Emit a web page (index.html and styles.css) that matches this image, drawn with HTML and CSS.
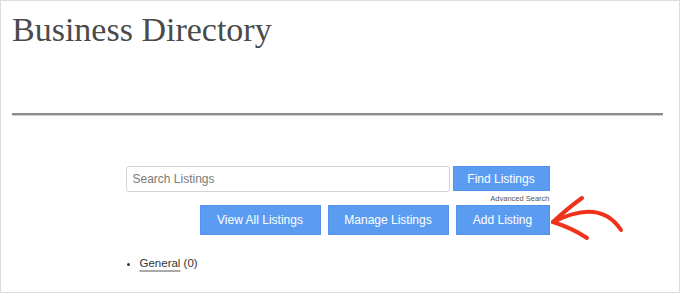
FILE: index.html
```html
<!DOCTYPE html>
<html lang="en">
<head>
<meta charset="utf-8">
<title>Business Directory</title>
<link rel="stylesheet" href="styles.css">
</head>
<body>
<div class="frame">
  <h1 class="title">Business Directory</h1>
  <div class="rule"></div>
  <div class="directory">
    <div class="search-row">
      <input class="search-input" type="text" placeholder="Search Listings">
      <div class="find-col">
        <button class="btn btn-find">Find Listings</button>
        <a class="advanced" href="#">Advanced Search</a>
      </div>
    </div>
    <div class="action-row">
      <button class="btn btn-action btn-wide">View All Listings</button>
      <button class="btn btn-action btn-wide">Manage Listings</button>
      <button class="btn btn-action btn-add">Add Listing</button>
    </div>
    <ul class="cats">
      <li><a href="#" class="cat-link">General</a> (0)</li>
    </ul>
  </div>
  <svg class="arrow" width="90" height="60" viewBox="540 190 90 60" xmlns="http://www.w3.org/2000/svg">
    <path d="M553,222 Q600,198 621,230" fill="none" stroke="#f0321c" stroke-width="4" stroke-linecap="round"/>
    <path d="M553,222 Q568,208 582,198" fill="none" stroke="#f0321c" stroke-width="4" stroke-linecap="round"/>
    <path d="M553,222 Q572,228 587,238" fill="none" stroke="#f0321c" stroke-width="4" stroke-linecap="round"/>
  </svg>
</div>
</body>
</html>
```
FILE: styles.css
```css
* { box-sizing: border-box; }
html, body { margin: 0; padding: 0; background: #fff; }
.frame {
  position: relative;
  width: 680px;
  height: 293px;
  border: 1px solid #dcdcdc;
  padding: 9px 16px 0 11px;
  font-family: "Liberation Sans", Arial, sans-serif;
  color: #333;
}
.title {
  margin: 0;
  font-family: "Liberation Serif", serif;
  font-weight: normal;
  font-size: 34px;
  line-height: 39px;
  color: #4a4a4a;
}
.rule {
  margin-top: 64px;
  height: 3px;
  background: #8c8c8c;
  border-bottom: 1px solid #d0d0d0;
  background-clip: content-box;
}
.directory {
  width: 424px;
  margin: 50px auto 0;
}
.search-row {
  display: flex;
  gap: 3px;
}
.search-input {
  width: 324px;
  height: 26px;
  border: 1px solid #d4d4d4;
  border-radius: 3px;
  padding: 0 6px;
  font-family: "Liberation Sans", Arial, sans-serif;
  font-size: 12px;
  color: #333;
  outline: none;
}
.search-input::placeholder { color: #7a7a7a; }
.find-col {
  display: flex;
  flex-direction: column;
  align-items: flex-end;
  width: 97px;
}
.btn {
  background: #5b9cf3;
  border: 1px solid #4f93ef;
  color: #fff;
  font-family: "Liberation Sans", Arial, sans-serif;
  font-size: 12px;
  padding: 0;
  margin: 0;
  cursor: pointer;
}
.btn-find {
  width: 97px;
  height: 25px;
}
.advanced {
  font-size: 7.5px;
  color: #555;
  text-decoration: none;
  margin-top: 3px;
  line-height: 9px;
}
.action-row {
  display: flex;
  justify-content: flex-end;
  gap: 7px;
  margin-top: 2px;
}
.btn-action { height: 30px; }
.btn-wide { width: 121px; }
.btn-add { width: 94px; }
.cats {
  margin: 20px 0 0;
  padding-left: 14px;
  font-size: 11.5px;
  line-height: 16px;
}
.cat-link {
  color: #333;
  text-decoration: underline;
  text-decoration-color: #aaa;
  text-decoration-thickness: 2px;
  text-underline-offset: 3px;
}
.arrow {
  position: absolute;
  left: 539px;
  top: 189px;
}
```
